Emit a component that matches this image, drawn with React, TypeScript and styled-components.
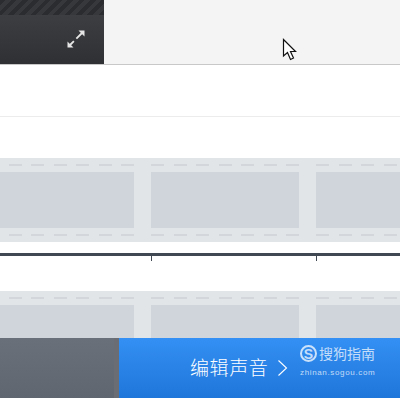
import React from "react";
import styled, { createGlobalStyle } from "styled-components";

const Global = createGlobalStyle`
  html, body { margin: 0; padding: 0; background: #fff; overflow: hidden; }
  #root { width: 400px; height: 400px; overflow: hidden; }
`;
const Page = styled.div`
  width: 400px; height: 400px; display: flex; flex-direction: column; overflow: hidden; background: #fff;
  font-family: "Noto Sans CJK SC", "Liberation Sans", sans-serif; position: relative;
`;
const TopBar = styled.div`
  height: 65px; flex: none; box-sizing: border-box; background: #f4f4f4; border-bottom: 1px solid #c8c8c8; display: flex; position: relative;
`;
const DarkPanel = styled.div`
  width: 104px; height: 64px; display: flex; flex-direction: column;
`;
const Hatch = styled.div`
  height: 15px; flex: none;
  background: repeating-linear-gradient(135deg, #2b2c2f 0 4px, #37383b 4px 8px);
`;
const PanelBody = styled.div`
  flex: 1; background: linear-gradient(#3d3e41, #2f3033); display: flex; justify-content: flex-end; padding: 14px 18px 0 0; box-sizing: border-box;
`;
const CursorIcon = styled.svg`
  position: absolute; left: 282px; top: 38px;
`;
const Row = styled.div<{ $h: number }>`
  height: ${p => p.$h}px; flex: none; box-sizing: border-box; background: #fff;
`;
const DividedRow = styled(Row)`
  border-bottom: 1px solid #ececec;
`;
const Strip = styled.div`
  height: 84px; flex: none; background: #e2e5e8; display: flex; gap: 17px; margin-left: -14px; width: 440px;
`;
const Frame = styled.div`
  width: 148px; flex: none; display: flex; flex-direction: column;
`;
const Holes = styled.div`
  height: 14px; flex: none; display: flex; justify-content: flex-end; align-items: center; gap: 9.5px;
`;
const Hole = styled.div`
  width: 13px; height: 2px; background: #d3d6db;
`;
const Picture = styled.div`
  height: 56px; flex: none; background: #d0d4db;
`;
const Timeline = styled.div`
  height: 8px; flex: none; margin-top: 11px; box-sizing: border-box; border-top: 3px solid #3f4853; position: relative;
`;
const Tick = styled.div<{ $x: number }>`
  position: absolute; left: ${p => p.$x}px; top: 0; width: 1px; height: 5px; background: #3f4853;
`;
const Bottom = styled.div`
  position: absolute; left: 0; right: 0; top: 338px; height: 60px; display: flex;
`;
const GreyPart = styled.div`
  width: 119px; flex: none; box-sizing: border-box; background: linear-gradient(#69707a, #5f6670); border-right: 5px solid #6a6d74;
`;
const BluePart = styled.div`
  flex: 1; background: linear-gradient(#3490f4, #1f76da); display: flex; align-items: center; padding: 0 0 0 71px; color: #fff; position: relative;
`;
const Label = styled.span`
  font-size: 19px; font-weight: 300; letter-spacing: 0.6px; line-height: 58px; height: 60px; white-space: nowrap;
`;
const Chevron = styled.svg`
  margin-left: 9px; flex: none;
`;
const Mark = styled.div`
  position: absolute; left: 181px; top: 6px; display: flex; flex-direction: column; color: rgba(255,255,255,.72);
`;
const MarkTop = styled.div`
  display: flex; align-items: center; gap: 2px; height: 19px;
`;
const MarkLogo = styled.div`
  width: 13px; height: 13px; border: 2.5px solid rgba(255,255,255,.75); border-radius: 50%; display: flex; align-items: center; justify-content: center;
  font: 700 14px "Liberation Sans", sans-serif;
`;
const MarkName = styled.span`
  font-size: 14px; line-height: 19px; white-space: nowrap;
`;
const MarkUrl = styled.span`
  font: 8px/10px "Liberation Sans", sans-serif; letter-spacing: 0.65px; margin-top: 5px; white-space: nowrap;
`;

const FilmStrip = () => (
  <Strip>
    {[0, 1, 2].map(i => (
      <Frame key={i}>
        <Holes>{[...Array(7)].map((_, j) => <Hole key={j} />)}</Holes>
        <Picture />
        <Holes>{[...Array(7)].map((_, j) => <Hole key={j} />)}</Holes>
      </Frame>
    ))}
  </Strip>
);

export default function App() {
  return (
    <Page>
      <Global />
      <TopBar>
        <DarkPanel>
          <Hatch />
          <PanelBody>
            <svg width="20" height="20" viewBox="0 0 20 20" fill="none">
              <path d="M4 16 L16 4" stroke="#e6e6e6" strokeWidth="1.8" strokeDasharray="5.5 3.5 8" />
              <path d="M12.5 1.5 H18.5 V7.5 Z M1.5 12.5 V18.5 H7.5 Z" fill="#e6e6e6" />
            </svg>
          </PanelBody>
        </DarkPanel>
        <CursorIcon width="16" height="24" viewBox="0 0 16 24">
          <path d="M1.5 1.5 V18 L5.5 14.5 L8.5 21.5 L11.5 20 L8.5 13.5 H13.5 Z" fill="#fff" stroke="#111" strokeWidth="1.2" />
        </CursorIcon>
      </TopBar>
      <DividedRow $h={52} />
      <Row $h={41} />
      <FilmStrip />
      <Timeline>
        <Tick $x={151} />
        <Tick $x={316} />
      </Timeline>
      <Row $h={30} />
      <FilmStrip />
      <Bottom>
        <GreyPart />
        <BluePart>
          <Label>编辑声音</Label>
          <Chevron width="12" height="18" viewBox="0 0 12 18" fill="none">
            <path d="M1.5 1.5 L9.5 9 L1.5 16.5" stroke="#fff" strokeWidth="1.1" />
          </Chevron>
          <Mark>
            <MarkTop>
              <MarkLogo>S</MarkLogo>
              <MarkName>搜狗指南</MarkName>
            </MarkTop>
            <MarkUrl>zhinan.sogou.com</MarkUrl>
          </Mark>
        </BluePart>
      </Bottom>
    </Page>
  );
}
